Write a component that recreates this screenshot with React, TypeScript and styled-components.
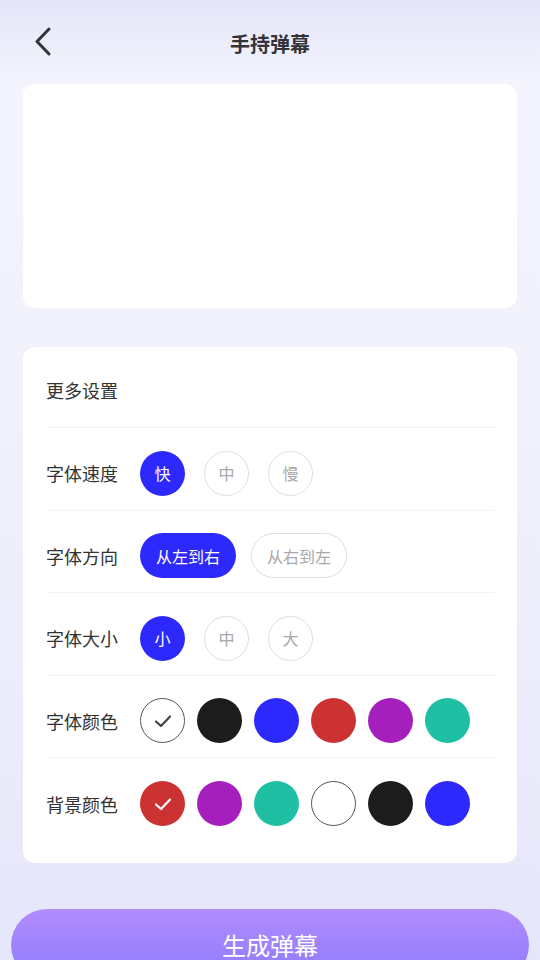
import styled, { createGlobalStyle } from "styled-components";

const GlobalStyle = createGlobalStyle`
  html, body { margin: 0; padding: 0; }
  body {
    font-family: "Noto Sans CJK SC", "Noto Sans", sans-serif;
    background: #eeeefb;
  }
  * { box-sizing: border-box; }
`;

const Page = styled.div`
  width: 540px;
  height: 960px;
  overflow: hidden;
  display: flex;
  flex-direction: column;
  background: linear-gradient(180deg, #e4e4f8 0px, #f3f4fd 80px, #f1f1fc 420px, #e6e6fa 960px);
  & > * { flex-shrink: 0; }
`;

const Header = styled.header`
  height: 84px;
  display: flex;
  align-items: center;
  justify-content: center;
  position: relative;
`;

const BackBtn = styled.div`
  position: absolute;
  left: 31px;
  top: 26px;
  width: 24px;
  height: 32px;
  display: flex;
  align-items: center;
  justify-content: center;
`;

const Title = styled.h1`
  margin: 0;
  margin-top: 2px;
  font-size: 20px;
  font-weight: 700;
  color: #333338;
`;

const Preview = styled.div`
  margin: 0 23px;
  height: 224px;
  background: #fff;
  border-radius: 12px;
`;

const Card = styled.section`
  margin: 39px 23px 0;
  background: #fff;
  border-radius: 12px;
  padding: 0 22px 0 23px;
  height: 516px;
`;

const CardTitle = styled.div`
  height: 81px;
  display: flex;
  align-items: center;
  font-size: 18px;
  color: #333;
  border-bottom: 1px solid #f2f2f4;
  padding-top: 6px;
`;

const Row = styled.div<{ $last?: boolean }>`
  height: 82.5px;
  display: flex;
  align-items: center;
  padding-top: 9px;
  border-bottom: ${(p) => (p.$last ? "none" : "1px solid #f2f2f4")};
`;

const Label = styled.span`
  width: 94px;
  font-size: 18px;
  color: #333;
`;

const Options = styled.div<{ $gap: number }>`
  display: flex;
  gap: ${(p) => p.$gap}px;
`;

const Chip = styled.div<{ $active?: boolean; $wide?: boolean }>`
  width: ${(p) => (p.$wide ? "96px" : "45px")};
  height: 45px;
  border-radius: 23px;
  display: flex;
  align-items: center;
  justify-content: center;
  font-size: 16px;
  background: ${(p) => (p.$active ? "#2d29fd" : "#fff")};
  color: ${(p) => (p.$active ? "#fff" : "#a8a8a8")};
  border: ${(p) => (p.$active ? "none" : "1.5px solid #dedede")};
`;

const Swatch = styled.div<{ $color: string }>`
  width: 45px;
  height: 45px;
  border-radius: 50%;
  background: ${(p) => p.$color};
  border: ${(p) => (p.$color === "#ffffff" ? "1.5px solid #555" : "none")};
  display: flex;
  align-items: center;
  justify-content: center;
`;

const Footer = styled.div`
  margin-top: 46px;
  padding: 0 11px;
`;

const GenerateBtn = styled.button`
  width: 100%;
  height: 72px;
  border: none;
  border-radius: 36px;
  background: linear-gradient(180deg, #b28cfd 0%, #8c7bfd 100%);
  color: #fff;
  font-family: inherit;
  font-size: 24px;
  display: flex;
  justify-content: center;
  padding-top: 18px;
`;

const Check = ({ color }: { color: string }) => (
  <svg width="20" height="16" viewBox="0 0 20 16">
    <path d="M3 8.5 L8 13 L17 3.5" fill="none" stroke={color} strokeWidth="2.2" strokeLinecap="round" strokeLinejoin="round" />
  </svg>
);

const fontColors = ["#ffffff", "#1c1c1c", "#2d29fd", "#cc3232", "#a51fbd", "#1ebfa3"];
const bgColors = ["#cc3232", "#a51fbd", "#1ebfa3", "#ffffff", "#1c1c1c", "#2d29fd"];

export default function App() {
  return (
    <Page>
      <GlobalStyle />
      <Header>
        <BackBtn>
          <svg width="20" height="32" viewBox="0 0 20 32">
            <path d="M16 3 L4 15.5 L16 28" fill="none" stroke="#333338" strokeWidth="3" strokeLinecap="round" strokeLinejoin="round" />
          </svg>
        </BackBtn>
        <Title>手持弹幕</Title>
      </Header>
      <Preview />
      <Card>
        <CardTitle>更多设置</CardTitle>
        <Row>
          <Label>字体速度</Label>
          <Options $gap={19}>
            <Chip $active>快</Chip>
            <Chip>中</Chip>
            <Chip>慢</Chip>
          </Options>
        </Row>
        <Row>
          <Label>字体方向</Label>
          <Options $gap={15}>
            <Chip $active $wide>从左到右</Chip>
            <Chip $wide>从右到左</Chip>
          </Options>
        </Row>
        <Row>
          <Label>字体大小</Label>
          <Options $gap={19}>
            <Chip $active>小</Chip>
            <Chip>中</Chip>
            <Chip>大</Chip>
          </Options>
        </Row>
        <Row>
          <Label>字体颜色</Label>
          <Options $gap={12}>
            {fontColors.map((c, i) => (
              <Swatch key={c} $color={c}>
                {i === 0 && <Check color="#444" />}
              </Swatch>
            ))}
          </Options>
        </Row>
        <Row $last>
          <Label>背景颜色</Label>
          <Options $gap={12}>
            {bgColors.map((c, i) => (
              <Swatch key={c} $color={c}>
                {i === 0 && <Check color="#fff" />}
              </Swatch>
            ))}
          </Options>
        </Row>
      </Card>
      <Footer>
        <GenerateBtn>生成弹幕</GenerateBtn>
      </Footer>
    </Page>
  );
}
